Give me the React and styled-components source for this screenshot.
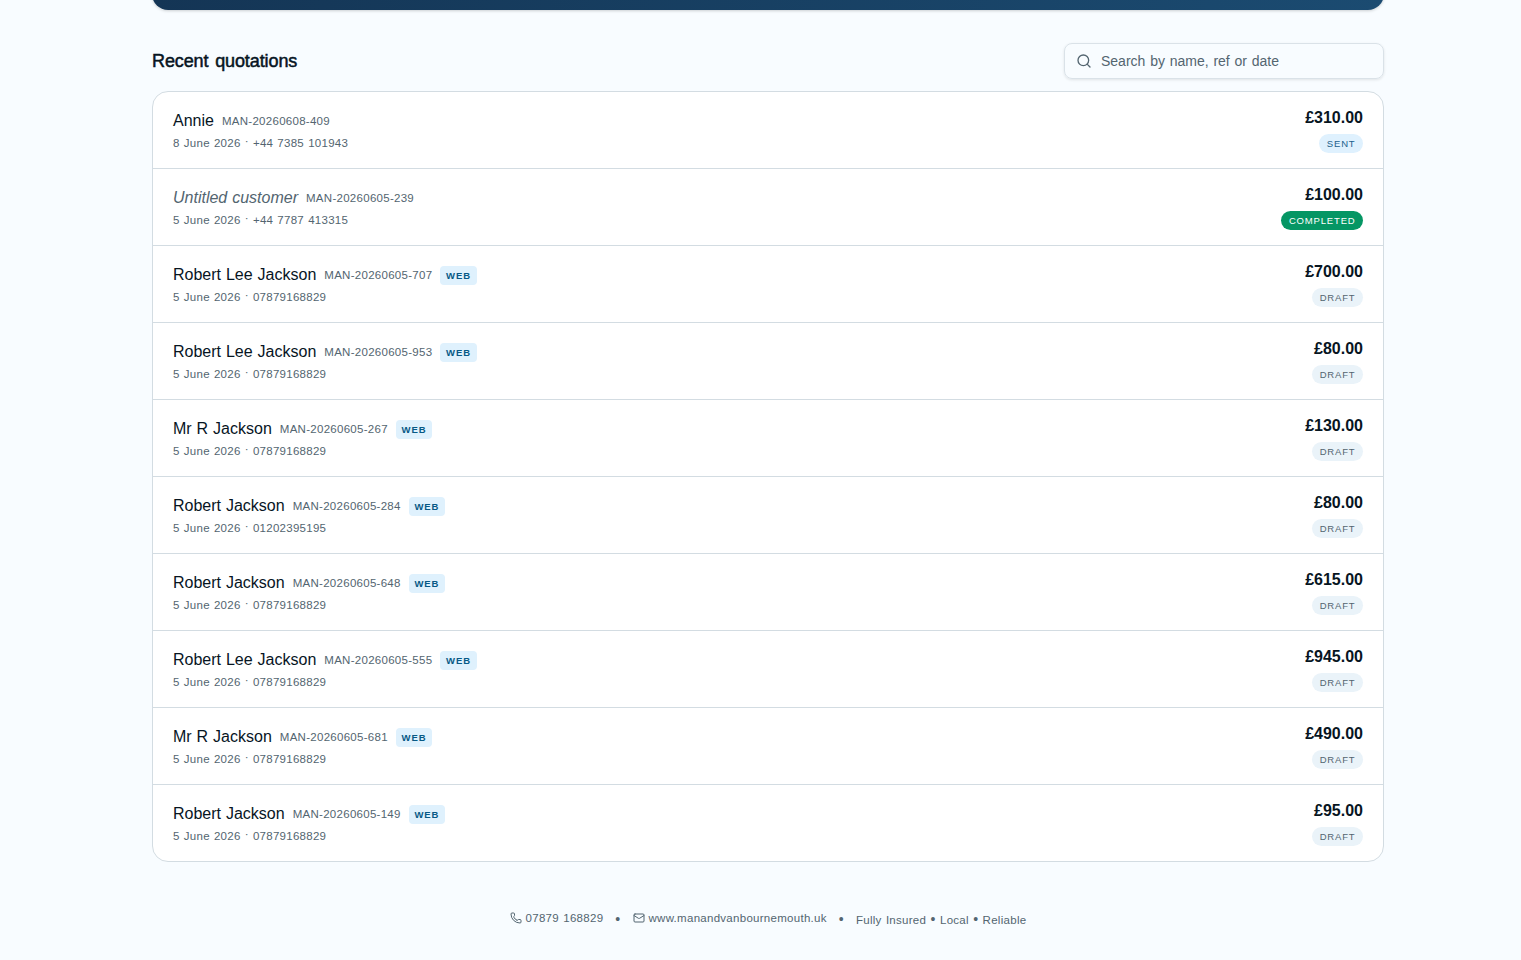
import styled, { createGlobalStyle, css } from "styled-components";
import { Mail, Phone, Search } from "lucide-react";

const GlobalStyle = createGlobalStyle`
  * {
    box-sizing: border-box;
  }

  body {
    margin: 0;
    overflow: hidden;
    background-color: #f8fcff;
    color: #07151f;
    font-family: "Liberation Sans", Arial, Helvetica, sans-serif;
  }
`;

const Page = styled.div`
  width: 1536px;
  height: 960px;
  display: flow-root;
  overflow: hidden;
  background-color: #f8fcff;
`;

const Content = styled.main`
  width: 1280px;
  margin: 0 auto;
  padding: 0 24px;
`;

const Hero = styled.div`
  height: 40px;
  margin-top: -30px;
  border-radius: 16px;
  background: linear-gradient(90deg, #143555 0%, #1b4b71 100%);
  box-shadow: 0 1px 3px rgba(0, 0, 0, 0.18);
`;

const SectionHeader = styled.div`
  display: flex;
  align-items: center;
  justify-content: space-between;
  margin-top: 33px;
  margin-bottom: 12px;
`;

const Title = styled.h2`
  margin: 0;
  font-size: 18px;
  line-height: 28px;
  font-weight: 400;
  letter-spacing: -0.1px;
  word-spacing: 1.8px;
  -webkit-text-stroke: 0.5px currentColor;
`;

const SearchBox = styled.label`
  width: 320px;
  height: 36px;
  padding: 0 11px;
  display: flex;
  align-items: center;
  gap: 9px;
  border: 1px solid #dae2e8;
  border-radius: 8px;
  box-shadow: 0 1px 3px rgba(0, 0, 0, 0.1);
  color: #536570;
`;

const SearchInput = styled.input`
  flex: 1;
  min-width: 0;
  padding: 0;
  border: none;
  outline: none;
  background: transparent;
  font-family: inherit;
  font-size: 14px;
  line-height: 20px;
  word-spacing: 0.9px;

  &::placeholder {
    color: #536570;
    opacity: 1;
  }
`;

const List = styled.ul`
  margin: 0;
  padding: 0;
  list-style: none;
  background-color: #fff;
  border: 1px solid #d3dce2;
  border-radius: 16px;
  overflow: hidden;
`;

const Row = styled.li`
  height: 77px;
  padding: 0 20px;
  display: flex;
  align-items: center;
  justify-content: space-between;
  border-bottom: 1px solid #d3dce2;

  &:last-child {
    height: 76px;
    border-bottom: none;
  }
`;

const Customer = styled.div`
  display: flex;
  flex-direction: column;
  gap: 2px;
`;

const NameLine = styled.div`
  height: 24px;
  display: flex;
  align-items: center;
  gap: 8px;
`;

const Name = styled.span`
  font-size: 16px;
  line-height: 24px;
  word-spacing: 0.5px;
  ${({ $untitled }) =>
    $untitled &&
    css`
      color: #536570;
      font-style: italic;
    `}
`;

const Ref = styled.span`
  color: #536570;
  font-size: 11.5px;
  line-height: 16px;
  letter-spacing: 0.28px;
`;

const WebTag = styled.span`
  height: 19px;
  padding: 0 5.7px;
  border-radius: 4px;
  background-color: #dff1fd;
  color: #075985;
  font-size: 9.5px;
  font-weight: 700;
  line-height: 19px;
  letter-spacing: 0.9px;
`;

const Meta = styled.div`
  color: #536570;
  font-size: 11.5px;
  line-height: 16px;
  letter-spacing: 0.27px;
  word-spacing: 0.65px;
`;

const Dot = styled.span`
  line-height: 1;
  vertical-align: 2px;
`;

const Totals = styled.div`
  padding-bottom: 1px;
  display: flex;
  flex-direction: column;
  align-items: flex-end;
  gap: 4px;
`;

const Price = styled.div`
  font-size: 16px;
  font-weight: 700;
  line-height: 24px;
`;

const statusColors = {
  sent: { background: "#dff1fe", color: "#22618d" },
  completed: { background: "#059664", color: "#ffffff" },
  draft: { background: "#eaf3f9", color: "#536570" },
};

const Status = styled.span`
  height: 19px;
  padding: 0 7.5px;
  border-radius: 10px;
  background-color: ${({ $status }) => statusColors[$status].background};
  color: ${({ $status }) => statusColors[$status].color};
  font-size: 9.5px;
  line-height: 19px;
  letter-spacing: 0.83px;
  text-transform: uppercase;
`;

const Footer = styled.footer`
  margin-top: 48px;
  display: flex;
  align-items: flex-start;
  justify-content: center;
  gap: 12px;
  color: #536570;
  font-size: 11.5px;
  line-height: 16px;
  letter-spacing: 0.28px;
  word-spacing: 0.8px;
`;

const Contact = styled.span`
  display: flex;
  align-items: center;
  gap: 4px;
`;

const FooterText = styled.span`
  padding-top: 2px;
`;

const Bullet = styled.span`
  font-size: 14px;
  line-height: 0;
`;

const quotations = [
  { name: "Annie", ref: "MAN-20260608-409", date: "8 June 2026", phone: "+44 7385 101943", price: "£310.00", status: "sent" },
  { name: "", ref: "MAN-20260605-239", date: "5 June 2026", phone: "+44 7787 413315", price: "£100.00", status: "completed" },
  { name: "Robert Lee Jackson", ref: "MAN-20260605-707", date: "5 June 2026", phone: "07879168829", price: "£700.00", status: "draft", web: true },
  { name: "Robert Lee Jackson", ref: "MAN-20260605-953", date: "5 June 2026", phone: "07879168829", price: "£80.00", status: "draft", web: true },
  { name: "Mr R Jackson", ref: "MAN-20260605-267", date: "5 June 2026", phone: "07879168829", price: "£130.00", status: "draft", web: true },
  { name: "Robert Jackson", ref: "MAN-20260605-284", date: "5 June 2026", phone: "01202395195", price: "£80.00", status: "draft", web: true },
  { name: "Robert Jackson", ref: "MAN-20260605-648", date: "5 June 2026", phone: "07879168829", price: "£615.00", status: "draft", web: true },
  { name: "Robert Lee Jackson", ref: "MAN-20260605-555", date: "5 June 2026", phone: "07879168829", price: "£945.00", status: "draft", web: true },
  { name: "Mr R Jackson", ref: "MAN-20260605-681", date: "5 June 2026", phone: "07879168829", price: "£490.00", status: "draft", web: true },
  { name: "Robert Jackson", ref: "MAN-20260605-149", date: "5 June 2026", phone: "07879168829", price: "£95.00", status: "draft", web: true },
];

function QuotationRow({ quotation }) {
  return (
    <Row>
      <Customer>
        <NameLine>
          <Name $untitled={!quotation.name}>
            {quotation.name || "Untitled customer"}
          </Name>
          <Ref>{quotation.ref}</Ref>
          {quotation.web && <WebTag>WEB</WebTag>}
        </NameLine>
        <Meta>
          {quotation.date} <Dot>·</Dot> {quotation.phone}
        </Meta>
      </Customer>
      <Totals>
        <Price>{quotation.price}</Price>
        <Status $status={quotation.status}>{quotation.status}</Status>
      </Totals>
    </Row>
  );
}

function App() {
  return (
    <Page>
      <GlobalStyle />
      <Content>
        <Hero />
        <SectionHeader>
          <Title>Recent quotations</Title>
          <SearchBox>
            <Search size={16} />
            <SearchInput type="text" placeholder="Search by name, ref or date" />
          </SearchBox>
        </SectionHeader>
        <List>
          {quotations.map((quotation) => (
            <QuotationRow key={quotation.ref} quotation={quotation} />
          ))}
        </List>
        <Footer>
          <Contact>
            <Phone size={12} />
            07879 168829
          </Contact>
          <FooterText>
            <Bullet>•</Bullet>
          </FooterText>
          <Contact>
            <Mail size={12} />
            www.manandvanbournemouth.uk
          </Contact>
          <FooterText>
            <Bullet>•</Bullet>
          </FooterText>
          <FooterText>
            Fully Insured <Bullet>•</Bullet> Local <Bullet>•</Bullet> Reliable
          </FooterText>
        </Footer>
      </Content>
    </Page>
  );
}

export default App;
